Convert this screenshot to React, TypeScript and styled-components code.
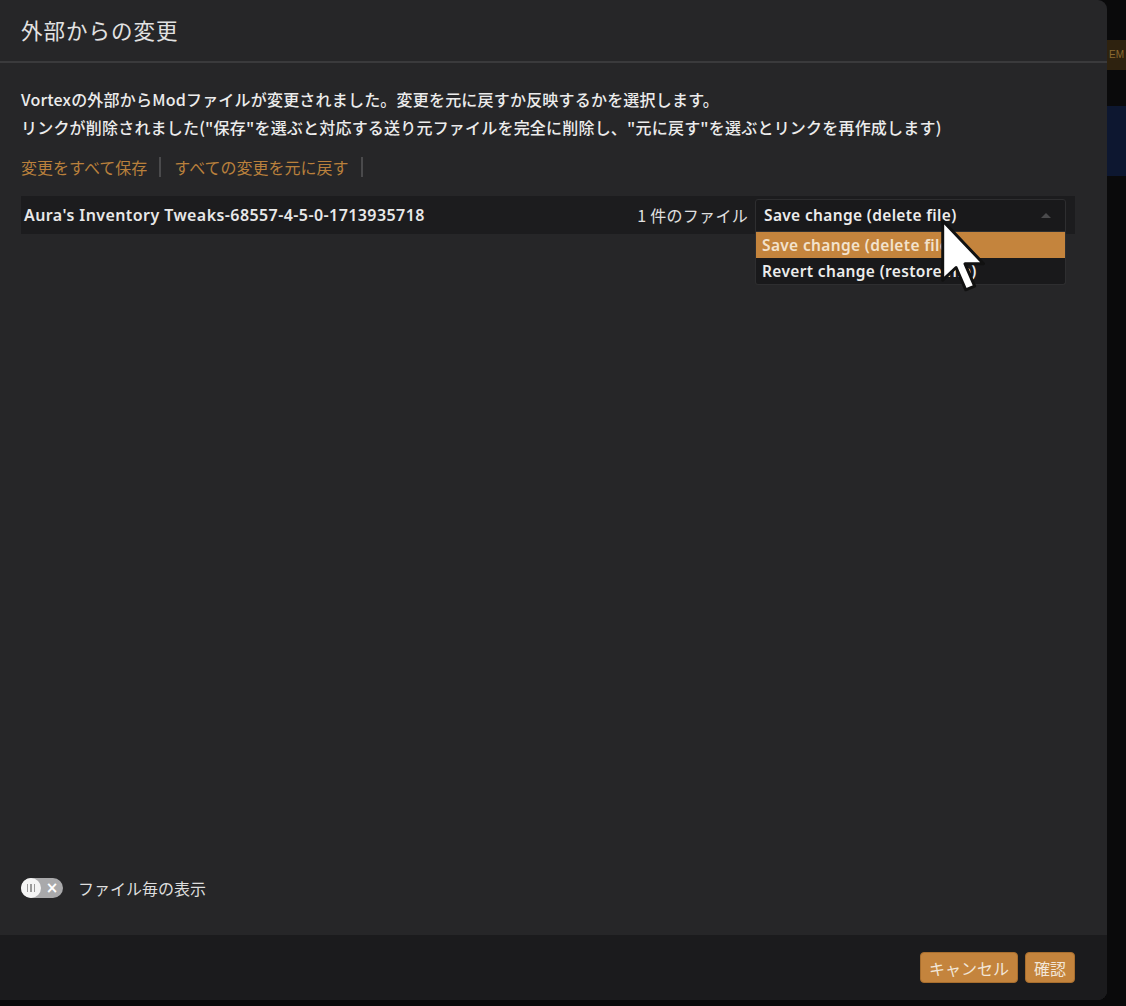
import React from "react";
import styled, { createGlobalStyle } from "styled-components";

const GlobalStyle = createGlobalStyle`
  html, body {
    margin: 0;
    padding: 0;
    background: #0a0a0b;
  }
  body {
    font-family: "Noto Sans CJK JP", "Noto Sans", Roboto, sans-serif;
    color: #e6e6e6;
  }
  * { box-sizing: border-box; }
`;

const Page = styled.div`
  display: flex;
  width: 1126px;
  height: 1006px;
  background: #0a0a0b;
  overflow: hidden;
`;

const Dialog = styled.div`
  width: 1107px;
  height: 1000px;
  display: flex;
  flex-direction: column;
  background: #262628;
  border-radius: 0 9px 9px 0;
  overflow: hidden;
  flex-shrink: 0;
`;

const Header = styled.div`
  height: 63px;
  display: flex;
  align-items: center;
  padding: 0 0 2px 21px;
  border-bottom: 2px solid #3a3a3c;
  font-size: 21.5px;
  font-weight: 400;
  color: #e2e2e2;
  letter-spacing: 1px;
`;

const Body = styled.div`
  flex: 1;
  display: flex;
  flex-direction: column;
  padding: 22px 32px 35px 21px;
`;

const Line = styled.div`
  font-size: 16px;
  line-height: 28px;
  font-weight: 500;
  color: #ececec;
  white-space: nowrap;
  letter-spacing: 0.2px;
`;

const Links = styled.div`
  display: flex;
  align-items: center;
  margin-top: 12px;
  height: 28px;
  font-size: 16px;
  font-weight: 400;
`;

const LinkText = styled.span`
  color: #b9803c;
  cursor: pointer;
`;

const Separator = styled.span`
  width: 2px;
  height: 20px;
  background: #4a4a4c;
  margin: 0 13px 0 12px;
`;

const Table = styled.div`
  margin-top: 15px;
  display: flex;
  flex-direction: column;
`;

const Row = styled.div`
  height: 38px;
  display: flex;
  align-items: center;
  background: #1c1c1e;
  padding: 0 9px 0 3px;
`;

const ModName = styled.div`
  flex: 1;
  font-family: "Noto Sans", Roboto, sans-serif;
  font-size: 16px;
  font-weight: 600;
  letter-spacing: 0.42px;
  color: #e8e8e8;
`;

const Count = styled.div`
  font-size: 16px;
  font-weight: 400;
  color: #e0e0e0;
  margin-right: 7px;
  letter-spacing: 0.3px;
`;

const SelectWrap = styled.div`
  position: relative;
  width: 311px;
`;

const SelectBox = styled.div`
  height: 33px;
  display: flex;
  align-items: center;
  justify-content: space-between;
  padding: 0 14px 0 8px;
  background: #19191b;
  border: 1px solid #2e2e30;
  border-radius: 3px 3px 0 0;
  font-family: "Noto Sans", Roboto, sans-serif;
  font-size: 15.5px;
  font-weight: 600;
  letter-spacing: 0.35px;
  color: #ececec;
`;

const Arrow = styled.span`
  width: 0;
  height: 0;
  border-left: 5px solid transparent;
  border-right: 5px solid transparent;
  border-bottom: 5px solid #4a4a4c;
`;

const Menu = styled.div`
  position: absolute;
  top: 100%;
  left: 0;
  right: 0;
  background: #19191b;
  border: 1px solid #2e2e30;
  border-top: none;
  border-radius: 0 0 3px 3px;
  z-index: 5;
`;

const Option = styled.div<{ $active?: boolean }>`
  height: 26px;
  display: flex;
  align-items: center;
  padding: 0 6px;
  font-family: "Noto Sans", Roboto, sans-serif;
  font-size: 15.5px;
  font-weight: 600;
  letter-spacing: 0.35px;
  color: ${(p) => (p.$active ? "#f3e2cc" : "#ececec")};
  background: ${(p) => (p.$active ? "#c4843d" : "transparent")};
`;

const Cursor = styled.svg`
  position: absolute;
  left: 184px;
  top: 18px;
  z-index: 10;
  pointer-events: none;
`;

const ToggleRow = styled.div`
  margin-top: auto;
  display: flex;
  align-items: center;
  gap: 15px;
  font-size: 16px;
  color: #dedede;
`;

const Toggle = styled.div`
  width: 42px;
  height: 20px;
  border-radius: 10px;
  background: #a9a9ab;
  display: flex;
  align-items: center;
  position: relative;
`;

const Knob = styled.div`
  width: 20px;
  height: 20px;
  border-radius: 50%;
  background: #f4f4f4;
  display: flex;
  align-items: center;
  justify-content: center;
  gap: 2px;
`;

const KnobLine = styled.span`
  width: 1.5px;
  height: 8px;
  background: #9a9a9a;
`;

const Cross = styled.span`
  flex: 1;
  text-align: center;
  color: #ffffff;
  font-family: "DejaVu Sans", sans-serif;
  font-size: 15px;
  font-weight: 700;
  line-height: 20px;
`;

const Footer = styled.div`
  height: 65px;
  display: flex;
  align-items: center;
  justify-content: flex-end;
  gap: 7px;
  padding: 0 32px 0 0;
  background: #1b1b1d;
`;

const Button = styled.button`
  height: 31px;
  padding: 0 8px;
  border: 1px solid #a86e2e;
  border-radius: 4px;
  background: #c4843d;
  color: #f2e6d8;
  font-family: "Noto Sans CJK JP", sans-serif;
  font-size: 16px;
  font-weight: 400;
  cursor: pointer;
`;

const Backdrop = styled.div`
  flex: 1;
  display: flex;
  flex-direction: column;
  padding-top: 40px;
`;

const BackOrange = styled.div`
  height: 30px;
  background: #2e220f;
  color: #8a6a30;
  font-family: "Liberation Sans", sans-serif;
  font-size: 10px;
  line-height: 30px;
  padding-left: 2px;
`;

const BackBlue = styled.div`
  margin-top: 36px;
  height: 70px;
  background: #0d1730;
`;

export default function App() {
  return (
    <>
      <GlobalStyle />
      <Page>
        <Dialog>
          <Header>外部からの変更</Header>
          <Body>
            <Line>Vortexの外部からModファイルが変更されました。変更を元に戻すか反映するかを選択します。</Line>
            <Line>リンクが削除されました("保存"を選ぶと対応する送り元ファイルを完全に削除し、"元に戻す"を選ぶとリンクを再作成します)</Line>
            <Links>
              <LinkText>変更をすべて保存</LinkText>
              <Separator />
              <LinkText>すべての変更を元に戻す</LinkText>
              <Separator />
            </Links>
            <Table>
              <Row>
                <ModName>Aura's Inventory Tweaks-68557-4-5-0-1713935718</ModName>
                <Count>1 件のファイル</Count>
                <SelectWrap>
                  <SelectBox>
                    <span>Save change (delete file)</span>
                    <Arrow />
                  </SelectBox>
                  <Menu>
                    <Option $active>Save change (delete file)</Option>
                    <Option>Revert change (restore file)</Option>
                  </Menu>
                  <Cursor width="52" height="78" viewBox="0 0 14 21">
                    <path
                      d="M1 1 L1 17 L4.6 13.6 L7.2 19.6 L9.6 18.6 L7 12.6 L12 12.6 Z"
                      fill="#ffffff"
                      stroke="#111111"
                      strokeWidth="0.8"
                      strokeLinejoin="round"
                    />
                  </Cursor>
                </SelectWrap>
              </Row>
            </Table>
            <ToggleRow>
              <Toggle>
                <Knob>
                  <KnobLine />
                  <KnobLine />
                  <KnobLine />
                </Knob>
                <Cross>×</Cross>
              </Toggle>
              <span>ファイル毎の表示</span>
            </ToggleRow>
          </Body>
          <Footer>
            <Button>キャンセル</Button>
            <Button>確認</Button>
          </Footer>
        </Dialog>
        <Backdrop>
          <BackOrange>EM</BackOrange>
          <BackBlue />
        </Backdrop>
      </Page>
    </>
  );
}
